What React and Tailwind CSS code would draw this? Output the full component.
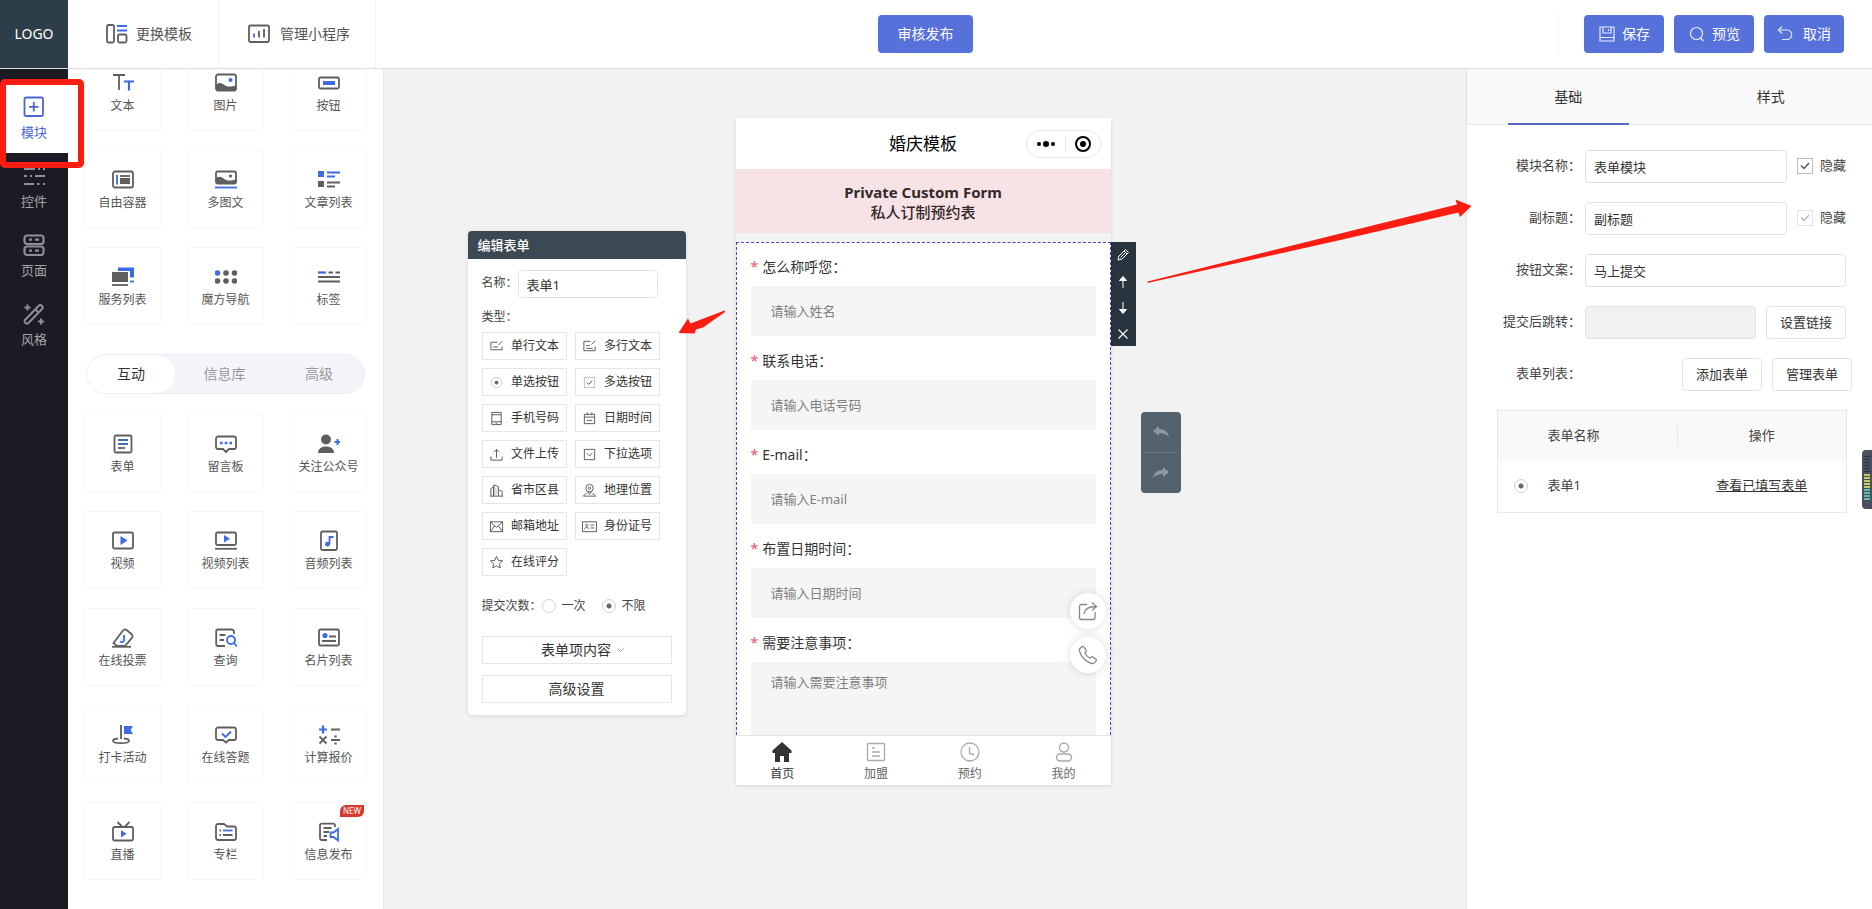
import React from "react";

const FONT = "font-['Noto_Sans','Noto_Sans_CJK_SC',sans-serif]";
const G = "#5f5f5f";
const B = "#3f6ae6";

function Svg({ size = 22, children, className = "" }) {
  return (
    <svg width={size} height={size} viewBox="0 0 22 22" fill="none" stroke={G} strokeWidth="1.8" className={className} aria-hidden="true">
      {children}
    </svg>
  );
}

const tileIcons = {
  text: (
    <>
      <path d="M1 3h12M7 3v15" />
      <path d="M12 9.500h10M17 9.500v9" stroke={B} strokeWidth="2.200" />
    </>
  ),
  image: (
    <>
      <rect x="1" y="2.500" width="20" height="16" rx="2" />
      <path d="M1 13c3-3.500 6-2 8.500 0s6 2 11.500 0.500V18.500H1z" fill={G} stroke="none" />
      <circle cx="15.500" cy="8" r="2" fill={B} stroke="none" />
    </>
  ),
  button: (
    <>
      <rect x="1" y="5.500" width="20" height="11" rx="1.500" />
      <rect x="5" y="9" width="12" height="4" fill={B} stroke="none" />
    </>
  ),
  container: (
    <>
      <rect x="1" y="2.500" width="20" height="16" rx="2" />
      <path d="M5 6v9.500" stroke={B} />
      <path d="M8 7h10" />
      <rect x="8" y="9" width="10" height="6" fill={G} stroke="none" />
    </>
  ),
  multi: (
    <>
      <rect x="1" y="2.500" width="20" height="12" rx="1.500" />
      <path d="M1 9c3-2.500 6-1 8.500 1s6 2 11.500 0.500V14.500H1z" fill={G} stroke="none" />
      <circle cx="15.500" cy="7" r="1.600" fill={G} stroke="none" />
      <path d="M0 18.500h22" stroke={B} />
    </>
  ),
  article: (
    <>
      <rect x="0" y="2" width="6" height="6" fill={B} stroke="none" />
      <path d="M9 3.500h13M9 7.500h8" stroke={B} />
      <rect x="0" y="12" width="6" height="6" fill={G} stroke="none" />
      <path d="M9 13.500h13M9 17.500h8" />
    </>
  ),
  service: (
    <>
      <rect x="0" y="6" width="16" height="10" fill={G} stroke="none" />
      <path d="M0 19h16" />
      <path d="M6 1.500h16v10h-4V5H6z" fill={B} stroke="none" />
      <path d="M18 15.500h4" stroke={B} />
    </>
  ),
  cube: (
    <>
      <circle cx="2.500" cy="7" r="2.800" fill={B} stroke="none" />
      <circle cx="11" cy="7" r="2.800" fill={G} stroke="none" />
      <circle cx="19.500" cy="7" r="2.800" fill={G} stroke="none" />
      <circle cx="2.500" cy="15" r="2.800" fill={G} stroke="none" />
      <circle cx="11" cy="15" r="2.800" fill={G} stroke="none" />
      <circle cx="19.500" cy="15" r="2.800" fill={G} stroke="none" />
    </>
  ),
  label: (
    <>
      <path d="M0 6.500h8" stroke={B} strokeWidth="2.200" />
      <path d="M10.500 6.500h4.500M17.500 6.500h4.500M0 11h22M0 15.500h22" />
    </>
  ),
  form: (
    <>
      <rect x="2.500" y="2.500" width="17" height="17" rx="1.500" />
      <path d="M6 7h10M6 11h10" stroke="#456fae" />
      <path d="M6 15h7" />
    </>
  ),
  message: (
    <>
      <path d="M3 3.500h16a2 2 0 0 1 2 2v8.500a2 2 0 0 1-2 2h-5l-3 3-3-3H3a2 2 0 0 1-2-2V5.500a2 2 0 0 1 2-2z" />
      <path d="M5 10h2.600M9.700 10h2.600M14.400 10h2.600" stroke={B} strokeWidth="2.600" />
    </>
  ),
  follow: (
    <>
      <circle cx="8" cy="6.500" r="5" fill={G} stroke="none" />
      <path d="M0 20c0-4 3-6.500 8-6.500s8 2.500 8 6.500z" fill={G} stroke="none" />
      <path d="M16.500 9h6M19.500 6v6" stroke={B} strokeWidth="2" />
    </>
  ),
  video: (
    <>
      <rect x="1" y="2.500" width="20" height="16" rx="1.500" />
      <path d="M8.500 6l7 4.500-7 4.500z" fill={B} stroke="none" />
    </>
  ),
  videos: (
    <>
      <rect x="1" y="2.500" width="20" height="12.500" rx="1.500" />
      <path d="M9 5l6 3.800-6 3.800z" fill={B} stroke="none" />
      <path d="M0 18.800h22" />
    </>
  ),
  audio: (
    <>
      <rect x="3" y="1.500" width="16" height="18.500" rx="1.500" />
      <path d="M11.500 14V7h4" stroke={B} />
      <circle cx="9.500" cy="14.200" r="2.400" fill={B} stroke="none" />
    </>
  ),
  vote: (
    <>
      <path d="M1.500 16L11 3.500c1-1.200 2.500-1.400 3.600-.5l5 4.200c1.200 1 1.300 2.500.3 3.700L13 19H5z" />
      <path d="M0 19.800h19" />
      <path d="M12 8v5.500c0 1.500-2 2-4 1" stroke={B} />
    </>
  ),
  query: (
    <>
      <path d="M19 7V5a2.500 2.500 0 0 0-2.500-2.500H3A1.800 1.800 0 0 0 1.200 4.300v13A1.800 1.800 0 0 0 3 19h7M4.500 8h6M4.500 13h4.500" />
      <circle cx="16" cy="13" r="4" stroke={B} />
      <path d="M19 16l3 3.500" stroke={B} />
    </>
  ),
  card: (
    <>
      <rect x="1" y="2.500" width="20" height="16" rx="1.500" />
      <circle cx="7" cy="8.500" r="2.600" fill={B} stroke="none" />
      <path d="M11 9.500h7M4 14h14" />
    </>
  ),
  flag: (
    <>
      <path d="M9 1v14M6 14.500c-3 .3-5 1-5 2.300 0 1.500 4 2.400 8 2.400s8-.9 8-2.400c0-1.300-2-2-5-2.300" />
      <path d="M12 2h9l-2.500 4 2.500 4h-9z" fill={B} stroke="none" />
    </>
  ),
  answer: (
    <>
      <path d="M3 3.500h16a2 2 0 0 1 2 2V14a2 2 0 0 1-2 2h-5l-3 2.500L8 16H3a2 2 0 0 1-2-2V5.500a2 2 0 0 1 2-2z" />
      <path d="M7 9.500l3.500 3.500L16 7.500" stroke={B} />
    </>
  ),
  calc: (
    <>
      <path d="M1 5.500h8M5 1.500v8" stroke={B} strokeWidth="2.200" />
      <path d="M13 5.500h9M1.500 12.500l7 7M8.500 12.500l-7 7M13 16h9" />
      <path d="M16.300 12.500h2.400M16.300 19.500h2.400" />
    </>
  ),
  live: (
    <>
      <rect x="1" y="6" width="20" height="13.500" rx="1.500" />
      <path d="M5.500 1l4.500 4.500M17.500 1L13 5.500" />
      <path d="M9 9l5.500 3.800L9 16.500z" fill={B} stroke="none" />
    </>
  ),
  column: (
    <>
      <path d="M3 3h6l3 2.500h7a2 2 0 0 1 2 2V17a2 2 0 0 1-2 2H3a2 2 0 0 1-2-2V5a2 2 0 0 1 2-2z" />
      <path d="M4.500 9.500h1.500M4.500 14h1.500M8 14h9.500" />
      <path d="M8 9.500h9.500" stroke={B} />
    </>
  ),
  publish: (
    <>
      <path d="M17 6V4.500A1.800 1.800 0 0 0 15.200 2.700H3.800A1.800 1.800 0 0 0 2 4.500v12.800A1.800 1.800 0 0 0 3.800 19H9M5.500 7h8M5.500 11h5.500M5.500 15h3.500" />
      <path d="M12.500 11.500h3l4.500-3.500v11.500l-4.500-3.500h-3z" stroke={B} />
    </>
  ),
};

const topTiles = [
  ["文本", "text"], ["图片", "image"], ["按钮", "button"],
  ["自由容器", "container"], ["多图文", "multi"], ["文章列表", "article"],
  ["服务列表", "service"], ["魔方导航", "cube"], ["标签", "label"],
];
const bottomTiles = [
  ["表单", "form"], ["留言板", "message"], ["关注公众号", "follow"],
  ["视频", "video"], ["视频列表", "videos"], ["音频列表", "audio"],
  ["在线投票", "vote"], ["查询", "query"], ["名片列表", "card"],
  ["打卡活动", "flag"], ["在线答题", "answer"], ["计算报价", "calc"],
  ["直播", "live"], ["专栏", "column"], ["信息发布", "publish", true],
];

function TileGrid({ tiles }) {
  return (
    <div className="grid grid-cols-3 gap-x-[26px] gap-y-[19px] px-4">
      {tiles.map(([name, icon, isNew]) => (
        <button key={name} type="button" className="relative flex h-[78px] flex-col items-center gap-1 border border-[#f8f8f9] pt-[18px] text-xs leading-4 whitespace-nowrap text-[#555]">
          <Svg>{tileIcons[icon]}</Svg>
          <span>{name}</span>
          {isNew && (
            <span className="absolute top-0.5 right-0.5 h-3 w-6 rounded-tl-md rounded-br-md bg-[#d9392c] text-center text-[8px] leading-3 text-white">NEW</span>
          )}
        </button>
      ))}
    </div>
  );
}

function Header() {
  return (
    <header className="relative z-20 flex h-[69px] shrink-0 border-b border-[#dcdcde] bg-white text-sm text-[#555]">
      <div className="flex w-[68px] shrink-0 items-center justify-center bg-[#2d3e48] text-white">LOGO</div>
      <nav className="flex w-[316px] shrink-0">
        <button type="button" className="flex w-[151px] items-center justify-center gap-2 border-r border-[#f1f1f3] pl-3">
          <Svg>
            <rect x="1" y="2" width="7" height="17.500" rx="1.500" />
            <path d="M11 3h10M11 7.500h10" stroke={B} />
            <rect x="12" y="11.500" width="8.500" height="8" rx="1.500" />
          </Svg>
          更换模板
        </button>
        <button type="button" className="flex w-[157px] items-center justify-center gap-2.5 border-r border-[#f1f1f3] pl-1">
          <Svg>
            <rect x="1" y="2.500" width="20" height="16.500" rx="1.500" />
            <path d="M6 10.500v4" stroke={B} />
            <path d="M11 8v6.500M16 6v8.500" />
          </Svg>
          管理小程序
        </button>
      </nav>
      <div className="flex flex-1 items-center justify-center">
        <button type="button" className="h-[38px] w-[95px] rounded bg-[#5771db] text-white">审核发布</button>
      </div>
      <div className="flex w-[405px] shrink-0 items-center justify-end pr-7 text-white">
        <div className="mr-[25px] h-10 border-l border-[#f4f4f4]" />
        <div className="flex gap-2.5">
          <button type="button" className="flex h-[38px] w-20 items-center justify-center gap-1.5 rounded bg-[#5771db]">
            <svg width="18" height="18" viewBox="0 0 18 18" fill="none" stroke="#e6eaff" strokeWidth="1.200">
              <path d="M2 2h14v14H2zM5 2v6h8V2M10.500 4v2M2 12.500h14" />
            </svg>
            保存
          </button>
          <button type="button" className="flex h-[38px] w-20 items-center justify-center gap-1.5 rounded bg-[#5771db]">
            <svg width="18" height="18" viewBox="0 0 18 18" fill="none" stroke="#e6eaff" strokeWidth="1.200">
              <circle cx="8.500" cy="8.500" r="6" />
              <path d="M12.500 13l3 3" />
            </svg>
            预览
          </button>
          <button type="button" className="flex h-[38px] w-20 items-center justify-center gap-2.5 rounded bg-[#5771db]">
            <svg width="16" height="18" viewBox="0 0 16 18" fill="none" stroke="#e6eaff" strokeWidth="1.200">
              <path d="M5 1.500L1.500 5 5 8.500M1.500 5H10a4.700 4.700 0 0 1 0 9.500H5" />
            </svg>
            取消
          </button>
        </div>
      </div>
    </header>
  );
}

function Sidebar() {
  const item = "flex h-[69px] w-full flex-col items-center gap-1 pt-3 text-[13px] leading-5";
  return (
    <nav className="relative flex w-[68px] shrink-0 flex-col bg-[#1c1b24] pt-[15px] text-[#a3a3a8]">
      <button type="button" className={item + " bg-white text-[#4a66d8]"}>
        <Svg>
          <rect x="1.500" y="1.500" width="18.500" height="18.500" rx="1.500" stroke="#4a66d8" />
          <path d="M10.800 6v9.500M6 10.800h9.500" stroke="#4a66d8" />
        </Svg>
        模块
      </button>
      <button type="button" className={item}>
        <svg width="22" height="22" viewBox="0 0 22 22" fill="none" stroke="#8e8e94" strokeWidth="2">
          <path d="M1 4h11M15 4h2M20 4h2M1 11h3M7 11h2M12 11h10M1 19h10M14 19h2.500M20 19h2" />
        </svg>
        控件
      </button>
      <button type="button" className={item}>
        <svg width="22" height="22" viewBox="0 0 22 22" fill="none" stroke="#8e8e94" strokeWidth="2.200">
          <rect x="1.500" y="1.500" width="19" height="8.500" rx="2.500" />
          <rect x="1.500" y="12.500" width="19" height="8.500" rx="2.500" />
          <path d="M6 5.700h3M12 5.700h4M6 16.700h3M12 16.700h4" />
        </svg>
        页面
      </button>
      <button type="button" className={item}>
        <svg width="22" height="22" viewBox="0 0 22 22" fill="none" stroke="#8e8e94" strokeWidth="2">
          <path d="M2 17L15.500 3c1-1 2.500-1 3.500 0s1 2 0 3L5.500 20c-1 .8-2 .8-3 0s-1.300-2-.5-3zM12.500 6.500l3.500 3.500" />
          <path d="M4.500 1.500v6M1.500 4.500h6M18 15.500v6M15 18.500h6" />
        </svg>
        风格
      </button>
      <div className="pointer-events-none absolute top-[10px] left-0 z-30 h-[89px] w-[84px] rounded-[5px] border-[6px] border-[#fb1d12]" />
    </nav>
  );
}

const fieldTypes = [
  ["单行文本", <path d="M9 3.500H2v8h12V8M4.500 8.500h5M10 6.500l4-4" />],
  ["多行文本", <path d="M9 2.500H2v10h12V8M4.500 7h4M4.500 10h7M10 6l4-4" />],
  ["单选按钮", <><circle cx="8" cy="8" r="5.500" stroke="#ccc" /><circle cx="8" cy="8" r="2" fill="#666" stroke="none" /></>],
  ["多选按钮", <><rect x="2.500" y="2.500" width="11" height="11" stroke="#bbb" /><path d="M5 8l2 2 4-4" /></>],
  ["手机号码", <path d="M3 1.500h10v13H3zM3 4h10M3 11.500h10M7 13h2" />],
  ["日期时间", <path d="M2.500 3.500h11v10h-11zM2.500 6.500h11M5.500 1.500v3M10.500 1.500v3M5 10h6" />],
  ["文件上传", <path d="M2 10v4h12v-4M8 11.500V3M5 5.500L8 2.500l3 3" />],
  ["下拉选项", <path d="M2.500 2.500h11v11h-11zM5 6.500l3 3 3-3" />],
  ["省市区县", <path d="M2 14V6l3-2v10M5 14V2l5 2v10M10 7l4 2v5M1 14h14M7 6.500h1M7 9h1M7 11.500h1" />],
  ["地理位置", <><circle cx="8" cy="5.500" r="4" /><circle cx="8" cy="5.500" r="1.300" /><path d="M6 9l2 3 2-3M5 10.500L1.500 14h13L11 10.500" /></>],
  ["邮箱地址", <path d="M1.500 3h13v10.500h-13zM1.500 3L8 9l6.500-6M1.500 13.500L6 7.500M14.500 13.500L10 7.500" />],
  ["身份证号", <path d="M0.500 3h15v10.500h-15zM3 11c0-3 4-3 4 0M5 5.500a1.300 1.300 0 1 0 .1 0M9 6.500h4M9 9.500h4" />],
  ["在线评分", <path d="M8 1.500l1.900 4.200 4.600.5-3.400 3.100.9 4.500L8 11.500l-4 2.300.9-4.500L1.500 6.200l4.600-.5z" />],
];

function Radio({ name, checked, id }) {
  return (
    <input
      id={id}
      type="radio"
      name={name}
      defaultChecked={checked}
      className="h-3.5 w-3.5 shrink-0 appearance-none rounded-full border border-[#d2d2d2] bg-white bg-[radial-gradient(circle,#666_0_2px,transparent_3px)] bg-center not-checked:bg-none"
    />
  );
}

function EditPanel() {
  return (
    <section className="w-[218px] rounded-sm bg-white pb-3 text-[#444] shadow-[0_1px_4px_rgba(0,0,0,0.12)]">
      <h2 className="rounded-t-sm bg-[#3b4954] px-2.5 text-[13px] leading-7 font-medium text-white">编辑表单</h2>
      <div className="px-3.5 text-xs">
        <div className="flex pt-[11px]">
          <label htmlFor="form-name" className="w-9 shrink-0 leading-[26px]">名称：</label>
          <input id="form-name" defaultValue="表单1" className="h-7 w-[140px] rounded-sm border border-[#e2e2e2] px-2 text-[13px] text-[#333]" />
        </div>
        <div className="mt-2 leading-[22px]">类型：</div>
        <div className="mt-1 flex flex-wrap gap-2">
          {fieldTypes.map(([name, icon]) => (
            <button key={name} type="button" className="flex h-7 w-[85px] items-center justify-center gap-[7px] border border-[#e6e6e6] whitespace-nowrap text-[#333]">
              <svg width="15" height="15" viewBox="0 0 16 16" fill="none" stroke="#555" strokeWidth="1">{icon}</svg>
              {name}
            </button>
          ))}
        </div>
        <div className="mt-5 flex items-center leading-5">
          <span className="w-[60px] leading-5">提交次数：</span>
          <Radio name="times" id="once" />
          <label htmlFor="once" className="ml-1.5">一次</label>
          <span className="w-4" />
          <Radio name="times" id="unlimited" checked />
          <label htmlFor="unlimited" className="ml-1.5">不限</label>
        </div>
        <div className="mt-5 flex flex-col gap-[11px] text-sm text-[#333]">
          <button type="button" className="flex h-7 items-center justify-center gap-1.5 border border-[#e6e6e6] pl-3">
            表单项内容
            <svg width="7" height="6" viewBox="0 0 7 6" fill="none" stroke="#999"><path d="M.5 1.500l3 3 3-3" /></svg>
          </button>
          <button type="button" className="h-7 border border-[#e6e6e6]">高级设置</button>
        </div>
      </div>
    </section>
  );
}

const formFields = [
  ["怎么称呼您：", "请输入姓名"],
  ["联系电话：", "请输入电话号码"],
  ["E-mail：", "请输入E-mail"],
  ["布置日期时间：", "请输入日期时间"],
];

function Phone() {
  return (
    <section className="relative flex h-[667px] w-[375px] flex-col bg-[#f2f2f2] shadow-[0_1px_4px_rgba(0,0,0,0.12)]">
      <div className="grid h-[51px] shrink-0 grid-cols-3 items-center bg-white px-2.5">
        <span />
        <h1 className="text-center text-[17px] text-black">婚庆模板</h1>
        <div className="flex h-7 w-[75px] items-center justify-self-end rounded-full border border-[#e8e8e8]">
          <svg width="38" height="16" viewBox="0 0 38 16"><circle cx="12" cy="8" r="2" /><circle cx="19" cy="8" r="3" /><circle cx="26" cy="8" r="2" /></svg>
          <span className="h-4 border-l border-[#e5e5e5]" />
          <svg width="34" height="18" viewBox="0 0 34 18"><circle cx="17" cy="9" r="7" fill="none" stroke="#000" strokeWidth="2" /><circle cx="17" cy="9" r="3" /></svg>
        </div>
      </div>
      <div className="h-16 shrink-0 bg-[#f7e3e6] pt-[13px] text-center text-[15px] leading-5 text-[#33292b]">
        <p className="font-bold">Private Custom Form</p>
        <p className="font-medium">私人订制预约表</p>
      </div>
      <form className="mt-[9px] min-h-0 flex-1 overflow-hidden border border-b-0 border-dashed border-[#4a44b8] bg-white px-3.5 pt-3.5">
        {formFields.map(([label, hint], i) => (
          <div key={label} className="mb-[15px] flex flex-col gap-[9px]">
            <label htmlFor={"field-" + i} className="flex gap-1 text-sm leading-5 text-[#333]">
              <span className="text-[#f0506a]">*</span>{label}
            </label>
            <input id={"field-" + i} placeholder={hint} className="h-[50px] w-full bg-[#f5f5f5] px-5 text-[13px] placeholder:text-[#808080]" />
          </div>
        ))}
        <div className="flex flex-col gap-[9px]">
          <label htmlFor="notes" className="flex gap-1 text-sm leading-5 text-[#333]">
            <span className="text-[#f0506a]">*</span>需要注意事项：
          </label>
          <textarea id="notes" placeholder="请输入需要注意事项" className="h-24 w-full resize-none bg-[#f5f5f5] px-5 pt-2.5 text-[13px] leading-5 placeholder:text-[#808080]" />
        </div>
      </form>
      <nav className="grid h-[50px] shrink-0 grid-cols-4 border-t border-[#e4e4e4] bg-white text-xs leading-4 text-[#666]">
        <a href="#home" className="flex flex-col items-center gap-1 pt-1.5 text-[#333]">
          <svg width="20" height="20" viewBox="0 0 20 20" fill="#333"><path d="M10 0l9.500 8.500V11H17v9h-5v-6H8v6H3v-9H.5V8.500z" /></svg>
          首页
        </a>
        <a href="#join" className="flex flex-col items-center gap-1 pt-1.5">
          <svg width="20" height="20" viewBox="0 0 20 20" fill="none" stroke="#aaa" strokeWidth="1.300"><rect x="1.500" y="1.500" width="17" height="17" rx="1" /><path d="M6 6h3M6 10h8M6 14h8" /></svg>
          加盟
        </a>
        <a href="#booking" className="flex flex-col items-center gap-1 pt-1.5">
          <svg width="20" height="20" viewBox="0 0 20 20" fill="none" stroke="#aaa" strokeWidth="1.300"><circle cx="10" cy="10" r="9" /><path d="M9.500 5v6.500l4.500 1" /></svg>
          预约
        </a>
        <a href="#mine" className="flex flex-col items-center gap-1 pt-1.5">
          <svg width="20" height="20" viewBox="0 0 20 20" fill="none" stroke="#aaa" strokeWidth="1.400"><circle cx="10" cy="5.500" r="4.500" /><rect x="2.500" y="12" width="15" height="7" rx="3.500" /></svg>
          我的
        </a>
      </nav>
      <div className="absolute right-[5px] bottom-28 flex flex-col gap-2">
        <button type="button" aria-label="分享" className="flex h-9 w-9 items-center justify-center rounded-full bg-white shadow-[0_0_8px_rgba(0,0,0,0.15)]">
          <svg width="20" height="20" viewBox="0 0 20 20" fill="none" stroke="#888" strokeWidth="1.300"><path d="M9 3.500H3.500a2 2 0 0 0-2 2V16.500a2 2 0 0 0 2 2h11.500a2 2 0 0 0 2-2V11M6 13c.5-5 4-7.500 12-7.500M14 1.500l4.500 4-4.500 4" /></svg>
        </button>
        <button type="button" aria-label="电话" className="flex h-9 w-9 items-center justify-center rounded-full bg-white shadow-[0_0_8px_rgba(0,0,0,0.15)]">
          <svg width="20" height="20" viewBox="0 0 20 20" fill="none" stroke="#888" strokeWidth="1.300"><path d="M2 3.500L4 1.700c.6-.5 1.300-.4 1.800.2L8 5c.4.600.4 1.200-.1 1.700L6.800 8c1 2 2.800 4 5 5.200l1.400-1.200c.5-.4 1.200-.4 1.700 0l3 2.300c.6.500.6 1.200.1 1.800l-1.600 1.800c-1 1-3 .8-5.500-.5C7 15.400 3.500 11.500 2 7.500c-.6-1.700-.8-3.200 0-4z" /></svg>
        </button>
      </div>
    </section>
  );
}

function Canvas() {
  return (
    <main className="relative grid flex-1 grid-cols-[minmax(0,1fr)_375px_minmax(0,1fr)] items-start bg-[#f2f2f2] pt-[49px] pr-1">
      <div className="flex justify-end pt-[113px] pr-[50px]">
        <EditPanel />
      </div>
      <Phone />
      <div className="flex items-start gap-[5px]">
        <div className="mt-[124px] flex h-[104px] w-[25px] flex-col items-center justify-around bg-[#28343e]">
          <button type="button" aria-label="编辑">
            <svg width="14" height="14" viewBox="0 0 14 14" fill="none" stroke="#fff" strokeWidth="1"><path d="M2 12l.8-3.800L9.500 1.500 12.500 4.500 5.800 11.200zM8 3l3 3M4.500 9.500l5-5" /></svg>
          </button>
          <button type="button" aria-label="上移">
            <svg width="12" height="14" viewBox="0 0 12 14" fill="#fff" stroke="#fff"><path d="M6 13V4" /><path d="M2.500 5.500L6 1.500l3.500 4z" /></svg>
          </button>
          <button type="button" aria-label="下移">
            <svg width="12" height="14" viewBox="0 0 12 14" fill="#fff" stroke="#fff"><path d="M6 1v9" /><path d="M2.500 8.500L6 12.500l3.500-4z" /></svg>
          </button>
          <button type="button" aria-label="删除">
            <svg width="12" height="12" viewBox="0 0 12 12" stroke="#fff" strokeWidth="1.100"><path d="M1.500 1.500l9 9M10.500 1.500l-9 9" /></svg>
          </button>
        </div>
        <div className="mt-[294px] flex w-10 flex-col rounded-sm bg-[#53626c]">
          <button type="button" aria-label="撤销" className="mx-1 flex h-[41px] items-center justify-center border-b border-[#6b7a83]">
            <svg width="16" height="14" viewBox="0 0 16 14" fill="#8d989f"><path d="M6 1L0 6l6 5V8c4 0 7 1 10 4-1-5-4-8-10-8z" /></svg>
          </button>
          <button type="button" aria-label="重做" className="flex h-10 items-center justify-center">
            <svg width="16" height="14" viewBox="0 0 16 14" fill="#8d989f"><path d="M10 1l6 5-6 5V8c-4 0-7 1-10 4 1-5 4-8 10-8z" /></svg>
          </button>
        </div>
      </div>
      <svg width="47" height="26" viewBox="0 0 47 26" fill="#fb1d12" className="pointer-events-none absolute top-[240px] left-[294px]">
        <path d="M0.500 24L10 9.500l2.500 5L46.500 1.500 47 3 25 18.500l-7 2-1.500 4z" />
      </svg>
      <svg width="325" height="84" viewBox="0 0 325 84" fill="#fb1d12" className="pointer-events-none absolute top-[130px] right-[-6px] z-10">
        <path d="M0.500 82.500L310 5.500 308.500 0.500 324.500 7 313 18 311.500 13.500 200 39.500 0.500 84z" />
      </svg>
    </main>
  );
}

const input = "h-[33px] w-full min-w-0 rounded-sm border border-[#e2e2e2] px-2 text-[13px] text-[#333]";
const smallBtn = "h-[33px] w-20 shrink-0 rounded-sm border border-[#e2e2e2] bg-white text-[13px] text-[#333]";

function Row({ label, htmlFor, children, end }) {
  return (
    <div className={"mb-[19px] flex " + (end ? "pr-5" : "pr-[26px]")}>
      <label htmlFor={htmlFor} className="mr-1 w-[84px] shrink-0 text-right leading-[30px]">{label}</label>
      <div className="flex min-w-0 flex-1 items-center gap-2.5">{children}</div>
    </div>
  );
}

function HideCheck({ id, disabled }) {
  return (
    <label htmlFor={id} className="flex shrink-0 items-center gap-[7px] pb-0.5">
      <span className={"relative flex h-4 w-4 " + (disabled ? "opacity-40" : "")}>
        <input id={id} type="checkbox" defaultChecked disabled={disabled} className="peer h-4 w-4 appearance-none border border-[#bcbcbc] bg-white" />
        <svg width="16" height="16" viewBox="0 0 16 16" fill="none" stroke="#555" strokeWidth="1.400" className="pointer-events-none absolute inset-0 hidden peer-checked:block"><path d="M4 7.500l3 3 5-5.500" /></svg>
      </span>
      隐藏
    </label>
  );
}

function SettingsPanel() {
  return (
    <aside className="w-[406px] shrink-0 border-l border-[#e2e2e4] bg-white text-[13px] text-[#444]">
      <div className="grid h-14 grid-cols-2 border-b border-[#e8e8ea] bg-[#f9f9fa] text-sm text-[#333]">
        <button type="button" className="relative flex items-center justify-center">
          基础
          <span className="absolute -bottom-px left-1/5 h-0.5 w-3/5 bg-[#5468c8]" />
        </button>
        <button type="button">样式</button>
      </div>
      <div className="pt-[25px] pl-[30px]">
        <Row label="模块名称：" htmlFor="mod-name">
          <input id="mod-name" defaultValue="表单模块" className={input} />
          <HideCheck id="hide-name" />
        </Row>
        <Row label="副标题：" htmlFor="sub-title">
          <input id="sub-title" defaultValue="副标题" className={input} />
          <HideCheck id="hide-sub" disabled />
        </Row>
        <Row label="按钮文案：" htmlFor="btn-text">
          <input id="btn-text" defaultValue="马上提交" className={input} />
        </Row>
        <Row label="提交后跳转：" htmlFor="jump">
          <input id="jump" disabled className={input + " bg-[#f1f1f1]"} />
          <button type="button" className={smallBtn}>设置链接</button>
        </Row>
        <Row label="表单列表：" end>
          <span className="flex-1" />
          <button type="button" className={smallBtn}>添加表单</button>
          <button type="button" className={smallBtn}>管理表单</button>
        </Row>
        <div className="pr-[25px]">
          <table className="w-full border border-[#e8e8e8]">
            <thead className="bg-[#f9f9f9]">
              <tr className="h-[49px]">
                <th className="w-[50px]" />
                <th className="text-left font-normal">
                  <div className="flex items-center justify-between border-r border-[#e4e4e4]">表单名称</div>
                </th>
                <th className="w-[169px] font-normal">操作</th>
              </tr>
            </thead>
            <tbody>
              <tr className="h-[53px]">
                <td>
                  <div className="flex justify-center pr-1">
                    <Radio name="form" id="form-1" checked />
                  </div>
                </td>
                <td><label htmlFor="form-1">表单1</label></td>
                <td className="text-center"><a href="#records" className="text-[#333] underline">查看已填写表单</a></td>
              </tr>
            </tbody>
          </table>
        </div>
      </div>
    </aside>
  );
}

export default function App() {
  return (
    <div className={"relative flex h-screen min-w-[1480px] flex-col overflow-hidden " + FONT}>
      <Header />
      <div className="flex min-h-0 flex-1">
        <Sidebar />
        <aside className="flex w-[316px] shrink-0 flex-col overflow-hidden border-r border-[#e9e9ec] bg-white">
          <div className="-mt-4">
            <TileGrid tiles={topTiles} />
            <div className="mx-[18px] mt-[29px] mb-5 grid h-10 grid-cols-[88px_1fr_90px] rounded-full border border-[#ededf1] bg-[#f4f4fa] text-sm text-[#999]">
              <button type="button" className="rounded-[19px] bg-white text-[#333]">互动</button>
              <button type="button">信息库</button>
              <button type="button">高级</button>
            </div>
            <TileGrid tiles={bottomTiles} />
          </div>
        </aside>
        <Canvas />
        <SettingsPanel />
      </div>
      <div className="absolute top-[450px] right-0 z-20 flex h-[59px] w-2.5 flex-col items-end rounded-l bg-[#4a4f62] py-1.5 pr-0.5">
        <div className="h-[18px] w-1.5 bg-[repeating-linear-gradient(#2f3350_0_1px,#4a4f62_1px_3px)]" />
        <div className="h-[15px] w-1.5 bg-[repeating-linear-gradient(#c3cc5a_0_2px,#4a4f62_2px_3px)]" />
        <div className="h-[12px] w-1.5 bg-[repeating-linear-gradient(#5cbfa5_0_2px,#4a4f62_2px_3px)]" />
      </div>
    </div>
  );
}
